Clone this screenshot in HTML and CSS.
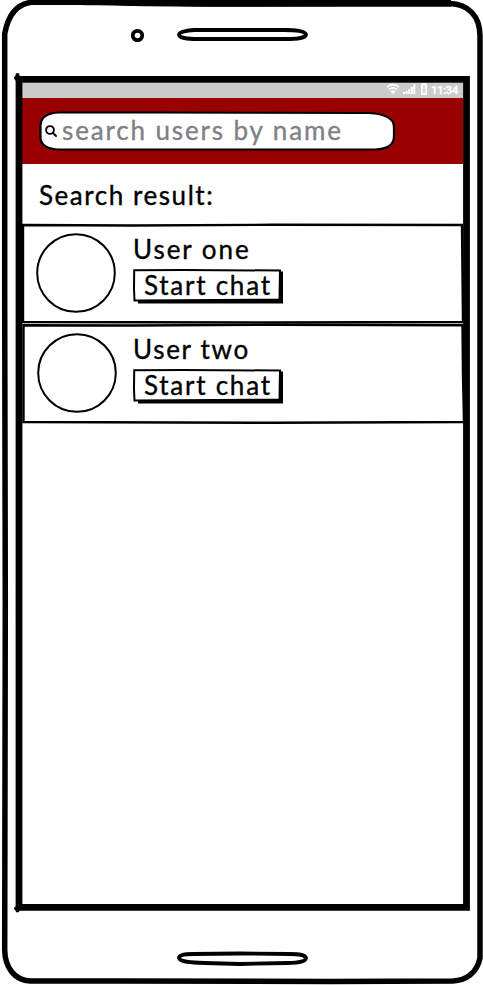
FILE: index.html
```html
<!DOCTYPE html>
<html lang="en">
<head>
<meta charset="utf-8">
<title>Search users</title>
<link rel="stylesheet" href="styles.css">
</head>
<body>
<div class="phone">
  <svg class="frame" viewBox="0 0 483 985" aria-hidden="true">
    <path class="shell" d="M4.700 34C8 15 17 3 34 2L80 2.200C120 3 160 4 210 4L450 3.500C468 4 480 16 480 36L480 958C477 973 466 980.500 453 981L330 981.500L120 981L30 981C14 980 5 967 4.700 950L5.300 600L4.700 300Z"/>
    <path class="shell-top" d="M32 0H451V6.500H210L110 5H32Z"/>
    <ellipse class="camera" cx="137.500" cy="35.500" rx="4.700" ry="4.700"/>
    <path class="slot" d="M195 30C185 30.500 179 32 179 35C180 39 190 39 205 39H290C300 39 306 37 306 34.500C305 31 296 30 284 30Z"/>
    <path class="slot" d="M240 953.500L193 954C184 954 179 955 179 958C180 962 191 962.500 205 963L240 964L287 963C300 963 306 961 306 958C305 954 299 954 290 954Z"/>
  </svg>
  <div class="screen">
    <div class="status">
      <svg class="wifi" viewBox="0 0 14 12"><path d="M1 4.200C4 .8 10 .8 13 4.200M3 6.500C5 4.300 9 4.300 11 6.500"/><path class="solid" d="M4.300 8.300C6 6.800 8 6.800 9.700 8.300L7 11Z"/></svg>
      <svg class="signal" viewBox="0 0 13 12"><path d="M0 9h2v2H0zM2.600 8h2v3h-2zM5.200 6h2v5h-2zM7.800 4h2v7h-2zM10.400 1h2v10h-2z"/></svg>
      <svg class="battery" viewBox="0 0 8 12"><path d="M2.500 0h3v1H7v11H1V1h1.500z"/><path class="cell" d="M2.500 2.500h3v8h-3z"/></svg>
      <span class="time">11:34</span>
    </div>
    <div class="header">
      <div class="search">
        <svg class="field" viewBox="0 0 356 40" aria-hidden="true"><path d="M20 1.500L110 1.500L330 2C346 3 355 7 355 16V25C355 34 349 38 336 38.500H20C8 38 2 34 1.500 27V14C2 6 9 2 20 1.500Z"/></svg>
        <svg class="glass" viewBox="0 0 12 12" aria-hidden="true"><circle cx="5" cy="5" r="3.900"/><path d="M8 8L11 11"/></svg>
        <span class="placeholder">search users by name</span>
      </div>
    </div>
    <div class="title"><span>Search result:</span></div>
    <div class="user">
      <svg class="row-lines" viewBox="0 0 442 100" aria-hidden="true"><path d="M1 1L110 1.500L250 .8L440 1L440.500 50L441 98L250 98.500L1 98Z"/></svg>
      <svg class="avatar" viewBox="0 0 82 82" aria-hidden="true"><circle cx="41" cy="41" r="38.800"/></svg>
      <div class="details">
        <span class="name one">User one</span>
        <div class="button">
          <svg class="button-lines" viewBox="0 0 151 35" aria-hidden="true"><path class="shadow" d="M5 30.500H147V2.500H150V34.500H5Z"/><path class="outline" d="M1.200 1.200L50 1L147 1.500L146.500 30.500L1.500 31.500L1 20Z"/></svg>
          <span>Start chat</span>
        </div>
      </div>
    </div>
    <div class="user second">
      <svg class="row-lines" viewBox="0 0 442 100" aria-hidden="true"><path d="M1.500 1.200L110 1.500L250 .8L440.500 1.200L441 50L442 98L250 98.800L1.500 98Z"/></svg>
      <svg class="avatar" viewBox="0 0 82 82" aria-hidden="true"><circle cx="42" cy="41" r="38.800"/></svg>
      <div class="details">
        <span class="name two">User two</span>
        <div class="button">
          <svg class="button-lines" viewBox="0 0 151 35" aria-hidden="true"><path class="shadow" d="M5 30.500H147V2.500H150V34.500H5Z"/><path class="outline" d="M1.200 1.200L50 1L147 1.500L146.500 30.500L1.500 31.500L1 20Z"/></svg>
          <span>Start chat</span>
        </div>
      </div>
    </div>
  </div>
  <svg class="screen-frame" viewBox="0 0 483 985" aria-hidden="true"><path d="M19 79.300H466.500V907.300H19Z"/><path class="corners" d="M16 78H19M17.500 75V80M16 908.500H19M17.500 908V910.500"/></svg>
</div>
</body>
</html>
```

FILE: styles.css
```css
* { box-sizing: border-box; }
body { margin: 0; background: #fff; }
svg { display: block; fill: none; stroke: #000; overflow: visible; }

.phone {
  position: relative;
  width: 483px;
  height: 985px;
  padding: 83px 20px 80px 22px;
  overflow: hidden;
  background: #fff;
  color: #000;
  font-family: Lato, "Liberation Sans", sans-serif;
  font-size: 26px;
  line-height: 32px;
  white-space: nowrap;
  -webkit-text-stroke: 0.35px currentColor;
}
.frame, .screen-frame { position: absolute; top: 0; left: 0; width: 483px; height: 985px; }
.shell { stroke-width: 5.5px; }
.shell-top { fill: #000; stroke: none; }
.camera { stroke-width: 3.8px; }
.slot { stroke-width: 3.8px; }
.screen-frame { stroke-width: 6.8px; pointer-events: none; }
.corners { stroke-width: 4px; stroke-linecap: round; }

.screen { position: relative; display: flex; flex-direction: column; height: 822px; }
.status {
  display: flex;
  align-items: flex-start;
  height: 15px;
  padding-left: 364px;
  background: #ccc;
}
.wifi { width: 14px; height: 12px; stroke: #fff; stroke-width: 1.6px; }
.wifi .solid { fill: #fff; stroke: none; }
.signal { width: 13px; height: 12px; margin-left: 3px; fill: #fff; stroke: none; }
.battery { width: 8px; height: 12px; margin-left: 4px; fill: #fff; stroke: none; }
.battery .cell { fill: #ddd; }
.time { margin-left: 3px; color: #fff; font: 500 11.500px/14px Roboto, sans-serif; letter-spacing: -0.5px; }

.header { height: 66px; padding: 13px 0 0 17px; background: #900; }
.search { position: relative; display: flex; align-items: center; width: 356px; height: 40px; padding-left: 6px; }
.field { position: absolute; inset: 0; width: 356px; height: 40px; fill: #fff; stroke-width: 2.2px; }
.glass { position: relative; width: 12px; height: 12px; stroke-width: 1.9px; stroke-linecap: round; }
.placeholder { position: relative; margin: -2px 0 0 5px; color: #808088; letter-spacing: 1.87px; }

.title { height: 60px; padding: 15px 0 0 17px; letter-spacing: 1.55px; }

.user { position: relative; display: flex; width: 442px; height: 100px; padding: 8px 0 0 13px; }
.row-lines { position: absolute; inset: 0; width: 442px; height: 100px; stroke-width: 2.4px; }
.avatar { width: 82px; height: 82px; stroke-width: 2px; }
.details { padding: 1px 0 0 16px; }
.name { display: block; height: 36px; line-height: 32px; }
.name.one { letter-spacing: 1.95px; }
.name.two { letter-spacing: 1.7px; }
.button { position: relative; width: 151px; height: 35px; padding-left: 11px; letter-spacing: 1.75px; }
.button-lines { position: absolute; inset: 0; width: 151px; height: 35px; }
.button .shadow { fill: #000; stroke: none; }
.button .outline { fill: #fff; stroke-width: 2px; }
.button span { position: relative; }
```
